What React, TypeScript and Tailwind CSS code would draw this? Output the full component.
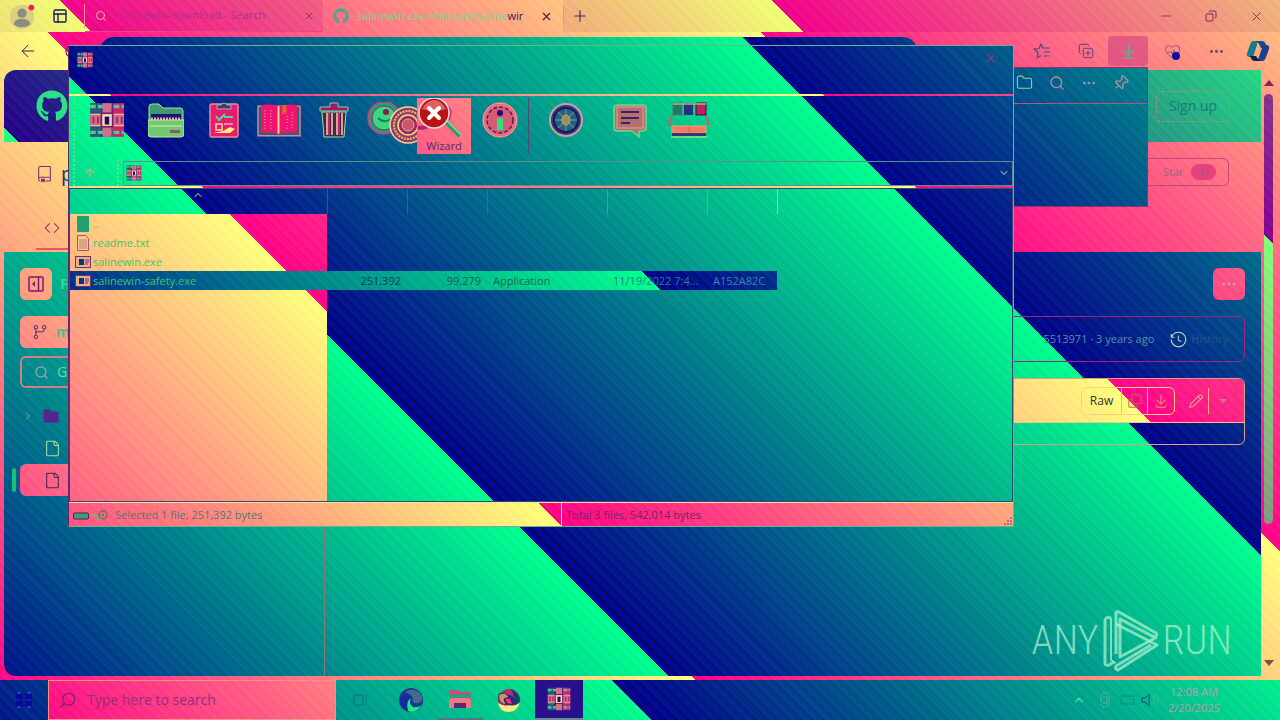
import React from "react";
import {
  ArrowLeft, ArrowDownToLine, Search, X, Plus, Minus, Copy, Ellipsis, Folder, Pin, ChevronDown, ChevronRight, ChevronUp,
  CopyPlus, ArrowUp, PanelsTopLeft, HeartPulse, RotateCw,
} from "lucide-react";
import { FaGithub } from "react-icons/fa";
import {
  GoCode, GoCopy, GoDownload, GoFile, GoFileDirectoryFill, GoGitBranch, GoHistory, GoPencil, GoRepo, GoStar,
} from "react-icons/go";

// Diagonal colour ramps anchored to the viewport, so neighbouring panels line up.
const cool =
  "bg-fixed bg-blend-screen bg-[repeating-linear-gradient(45deg,#060668_0px,#000008_8px),repeating-linear-gradient(45deg,#000068_0px,#00ff70_504px)]";
const coolBar =
  "bg-fixed bg-blend-screen bg-[repeating-linear-gradient(45deg,#060668_0px,#000008_8px),repeating-linear-gradient(45deg,#000068_461px,#00ff70_965px)]";
const coolPick =
  "bg-fixed bg-blend-screen bg-[repeating-linear-gradient(45deg,#060668_0px,#000008_8px),repeating-linear-gradient(45deg,#000068_267px,#00ff70_771px)]";
const violet =
  "bg-fixed bg-blend-screen bg-[repeating-linear-gradient(45deg,#060668_0px,#000008_8px),repeating-linear-gradient(45deg,#240068_422px,#24ff60_926px)]";
const plum =
  "bg-fixed bg-blend-screen bg-[repeating-linear-gradient(45deg,#060668_0px,#000008_8px),repeating-linear-gradient(45deg,#820070_229px,#82ff50_733px)]";
const warm =
  "bg-fixed bg-blend-screen bg-[repeating-linear-gradient(45deg,#08085a_0px,#000008_8px),repeating-linear-gradient(45deg,#ff006c_16px,#ffff60_520px)]";
const warmTitle =
  "bg-fixed bg-blend-screen bg-[repeating-linear-gradient(45deg,#08085a_0px,#000008_8px),repeating-linear-gradient(45deg,#f00070_47px,#f0ff54_551px)]";
const warmStatus =
  "bg-fixed bg-blend-screen bg-[repeating-linear-gradient(45deg,#08085a_0px,#000008_8px),repeating-linear-gradient(45deg,#ff0068_30px,#ffff5c_534px)]";

function Archive({ className }: { className: string }) {
  return (
    <svg viewBox="0 0 32 32" className={className} aria-hidden="true">
      <rect x="1" y="1" width="9" height="30" fill="#275a78" />
      <rect x="10" y="1" width="11" height="30" fill="#3a2c86" />
      <rect x="21" y="1" width="10" height="30" fill="#d61f6e" />
      <path d="M1 4h30M1 27h30" stroke="#54c890" strokeWidth="3" strokeDasharray="5 2" />
      <rect x="1" y="11" width="30" height="10" fill="#d8688a" />
      <path d="M1 11h30M1 21h30" stroke="#f0c090" strokeWidth="1" />
      <rect x="12" y="1" width="8" height="30" fill="#d0708c" />
      <rect x="11" y="10" width="10" height="12" fill="#f8d8b8" stroke="#70206a" strokeWidth="1.5" />
      <rect x="14" y="13" width="4" height="7" fill="#160c60" />
      <path d="M4 13v6M8 13v6M25 13v6M29 13v6" stroke="#8a2a70" strokeWidth="1.5" />
    </svg>
  );
}

function FolderIcon() {
  return (
    <svg viewBox="0 0 36 36" className="h-9 w-9" aria-hidden="true">
      <path d="M1 5q0-3 3-3h7l4 4h17q3 0 3 3v22H1z" fill="#3f9a70" stroke="#a6e09a" />
      <rect x="3" y="12" width="30" height="6" fill="#1c1470" />
      <path d="M3 17h30" stroke="#f4a0b8" strokeWidth="3" strokeDasharray="2 1" />
      <path d="M0 18h36v14q0 3-3 3H3q-3 0-3-3z" fill="#74c870" stroke="#b8ee98" />
      <path d="M2 24h32" stroke="#9be08a" strokeWidth="2" />
      <rect x="22" y="28" width="10" height="3" fill="#8c5a60" />
    </svg>
  );
}

function Clipboard() {
  return (
    <svg viewBox="0 0 36 36" className="h-9 w-9" aria-hidden="true">
      <rect x="4" y="2" width="28" height="33" rx="2" fill="#f0186e" stroke="#e88a90" strokeWidth="1.5" />
      <path d="M11 7V3h4q3-4 6 0h4v4z" fill="#58307a" stroke="#80c8a0" />
      <path d="M10 14l3 4 6-6M18 15h9" stroke="#4ae09a" strokeWidth="2" fill="none" />
      <rect x="10" y="22" width="6" height="6" fill="none" stroke="#ffe090" strokeWidth="1.5" />
      <path d="M7 31l10-2 7-4 5 2-5 4H9" fill="#fff080" />
      <path d="M18 22h9" stroke="#f4b0c0" strokeWidth="1.5" />
    </svg>
  );
}

function Book() {
  return (
    <svg viewBox="0 0 45 36" className="h-9 w-11" aria-hidden="true">
      <path d="M1 4h43v30H1z" fill="#206a74" stroke="#e080a0" strokeWidth="1.5" />
      <path d="M4 3q10-2 18 1v28q-8-2-18-1zM23 4q8-3 18-1v28q-10-1-18 1z" fill="#f01470" />
      <path d="M22 4v28" stroke="#ffd890" strokeWidth="2" />
      <path d="M8 8v20M14 8v20M36 10v18M31 14v14" stroke="#ff8090" strokeWidth="1.5" strokeDasharray="1 2" />
      <path d="M26 3h4v10l-2-3-2 3z" fill="#d07030" />
    </svg>
  );
}

function Trash() {
  return (
    <svg viewBox="0 0 36 36" className="h-9 w-9" aria-hidden="true">
      <path d="M4 9h28v-4H22V1h-8v4H4z" fill="#a01868" stroke="#78d8a0" />
      <path d="M6 10h24l-2 25H8z" fill="#3c2c40" stroke="#9ce0a0" />
      <path d="M11 11v22M16 11v22M21 11v22M26 11v22" stroke="#d8a098" strokeWidth="2" />
      <path d="M13 11v22M23 11v22" stroke="#c82068" strokeWidth="2" />
    </svg>
  );
}

function Discs() {
  return (
    <svg viewBox="0 0 56 48" className="h-12 w-14 shrink-0" aria-hidden="true">
      <circle cx="20" cy="16" r="16" fill="#20a070" stroke="#e03880" strokeWidth="1.5" />
      <circle cx="20" cy="16" r="12" fill="#38d880" stroke="#902868" />
      <circle cx="22" cy="10" r="3" fill="#8c1850" />
      <path d="M14 16q6 6 13 1" stroke="#188060" strokeWidth="2" fill="none" />
      <circle cx="44" cy="23" r="18" fill="#904060" stroke="#ffd490" strokeWidth="1.5" />
      <circle cx="44" cy="23" r="14" fill="none" stroke="#f8b080" strokeWidth="2" strokeDasharray="2 1" />
      <circle cx="44" cy="23" r="10" fill="#a02868" stroke="#f0e080" strokeWidth="1.5" />
      <circle cx="44" cy="23" r="6" fill="#c85870" stroke="#e0b080" />
    </svg>
  );
}

function Wand() {
  return (
    <svg viewBox="0 0 54 42" className="h-[42px] w-[54px]" aria-hidden="true">
      <path d="M27 22l16 16" stroke="#249a70" strokeWidth="4" />
      <path d="M28 21l16 16" stroke="#5cf09a" strokeWidth="1.5" />
      <path d="M30 8q6 4 2 14" stroke="#e02870" strokeWidth="2" fill="none" />
      <path d="M1 30q10 0 14-5" stroke="#b82070" strokeWidth="4" fill="none" />
      <circle cx="17" cy="15" r="15" fill="#b81414" stroke="#e8d8d8" strokeWidth="1.5" />
      <path d="M5 11q5-9 12-9t12 9q-12 4-24 0" fill="#e06060" />
      <path d="M12 10l10 10M22 10L12 20" stroke="#fff" strokeWidth="4" strokeLinecap="round" />
    </svg>
  );
}

function InfoRound() {
  return (
    <svg viewBox="0 0 36 36" className="h-9 w-9" aria-hidden="true">
      <circle cx="18" cy="18" r="17" fill="#f06a7c" stroke="#ffa890" />
      <circle cx="18" cy="18" r="13" fill="#d85a74" stroke="#3c2470" strokeWidth="1.5" strokeDasharray="4 2" />
      <circle cx="18" cy="11" r="3" fill="#181070" />
      <rect x="15" y="16" width="6" height="12" fill="#30e080" />
    </svg>
  );
}

function Shield() {
  return (
    <svg viewBox="0 0 36 36" className="h-9 w-9" aria-hidden="true">
      <circle cx="18" cy="18" r="16" fill="#24407a" stroke="#d89aa0" strokeWidth="2" />
      <circle cx="18" cy="18" r="12" fill="#285c88" stroke="#181860" strokeWidth="2" />
      <path d="M18 7v22M7 18h22M10 10l16 16M26 10L10 26" stroke="#5a8c70" strokeWidth="1.5" />
      <ellipse cx="18" cy="18" rx="4" ry="5" fill="#9a8c60" stroke="#d0b070" />
    </svg>
  );
}

function Comment() {
  return (
    <svg viewBox="0 0 36 36" className="h-9 w-9" aria-hidden="true">
      <path d="M5 3h26q3 0 3 3v20q0 3-3 3h-4v6l-7-6H5q-3 0-3-3V6q0-3 3-3z" fill="#b4706c" stroke="#6ad890" strokeWidth="1.5" />
      <path d="M5 5h26v21H5z" fill="none" stroke="#d89078" strokeWidth="1.5" />
      <path d="M9 10h18M9 16h18M9 21h9" stroke="#3a206c" strokeWidth="2" />
    </svg>
  );
}

function SfxBox() {
  return (
    <svg viewBox="0 0 42 36" className="h-9 w-[42px]" aria-hidden="true">
      <rect x="5" y="1" width="9" height="12" fill="#1f7a60" stroke="#60706c" />
      <rect x="16" y="1" width="9" height="12" fill="#2a3080" />
      <rect x="28" y="1" width="10" height="12" fill="#c0205c" stroke="#301050" />
      <path d="M5 2h33" stroke="#a8b880" strokeWidth="1.5" />
      <path d="M4 14L1 24M38 14l3 10" stroke="#e85068" strokeWidth="2" />
      <rect x="4" y="24" width="34" height="7" fill="#f47a60" stroke="#f8a070" />
      <path d="M21 24v7" stroke="#c87040" />
      <rect x="4" y="31" width="34" height="3" fill="#2a3c78" />
      <path d="M3 35h36" stroke="#f0e080" />
    </svg>
  );
}

function SidebarIcon() {
  return (
    <svg viewBox="0 0 16 16" className="h-4 w-4" fill="none" stroke="currentColor" strokeWidth="1.5" aria-hidden="true">
      <rect x="1" y="1" width="14" height="14" rx="1" />
      <path d="M10.500 1v14" />
      <path d="M7 5v6L4 8z" fill="currentColor" stroke="none" />
    </svg>
  );
}

function FavoritesIcon() {
  return (
    <svg viewBox="0 0 18 18" className="h-[18px] w-[18px]" fill="none" stroke="currentColor" strokeWidth="1.2" strokeLinejoin="round" aria-hidden="true">
      <path d="M11 6L9.500 6 8 2 6 6.500 1 7l4 3.500L4 16l4-2.500" stroke="#40507c" />
      <path d="M11 6h6M11 10h6M11 14h5" stroke="#305890" />
    </svg>
  );
}

function Tool({ label, width, children }: { label: string; width: string; children: React.ReactNode }) {
  return (
    <button aria-label={label} className={"flex h-14 shrink-0 justify-center pt-1 " + width}>
      {children}
    </button>
  );
}

function ExeIcon() {
  return (
    <svg viewBox="0 0 16 14" className="h-3.5 w-4 shrink-0" aria-hidden="true">
      <rect x="0.5" y="1.5" width="15" height="11" fill="#e8b088" stroke="#70306c" />
      <rect x="4" y="4" width="5" height="6" fill="#123078" />
      <path d="M10 5h4M10 7h4M10 9h3" stroke="#70306c" />
    </svg>
  );
}

function NameCell({ icon, text }: { icon: React.ReactNode; text: string }) {
  return (
    <div className="flex items-center gap-0.5 pl-[5px] text-[#40c46c]">
      {icon}
      <span>{text}</span>
    </div>
  );
}

function TabStrip() {
  return (
    <div className={"flex h-8 shrink-0 items-center " + warmTitle}>
      <button aria-label="Profile" className="flex w-11 justify-center">
        <svg viewBox="0 0 30 30" className="h-7 w-7" aria-hidden="true">
          <circle cx="15" cy="16" r="13" fill="#dcd07c" />
          <circle cx="15" cy="12" r="5" fill="#8c8c86" />
          <path d="M6 24q1-6 9-6t9 6q-4 3-9 3t-9-3" fill="#8c8c86" />
          <circle cx="25" cy="6" r="3" fill="#e82050" stroke="#f06080" strokeDasharray="1 1" />
        </svg>
      </button>
      <button aria-label="Workspaces" className="flex w-8 justify-center text-[#101860]">
        <PanelsTopLeft size={16} />
      </button>
      <div className="ml-2 flex h-6 items-center border-l border-[#ff9090]" />
      <div className="flex h-full w-[238px] items-center gap-2 border-b border-[#e04c80] pl-2.5 pr-2 text-[#b0308c]">
        <Search size={12} className="text-[#ffc098]" />
        <a href="#search" className="flex-1 truncate pl-1 text-[11px]">salinewin-download - Search</a>
        <button aria-label="Close search tab"><X size={12} className="text-[#80306c]" /></button>
      </div>
      <div className={"flex h-full w-60 items-center gap-2 px-2.5 " + warm}>
        <FaGithub size={16} className="text-[#4aa890]" />
        <a href="#repo" className="flex-1 overflow-hidden whitespace-nowrap text-[11px] text-[#80d488]">
          salinewin.exe-Malware/saline<span className="text-[#302050]">wir</span>
        </a>
        <button aria-label="Close repository tab"><X size={13} className="text-[#40204c]" /></button>
      </div>
      <button aria-label="New tab" className="flex w-8 justify-center border-l border-[#d8a070] text-[#40206c]">
        <Plus size={18} strokeWidth={1.5} />
      </button>
      <div className="flex flex-1 items-center justify-end gap-8 pr-4 text-[#80285c]">
        <button aria-label="Minimize"><Minus size={14} strokeWidth={1.5} /></button>
        <button aria-label="Restore"><Copy size={12} className="-scale-x-100" strokeWidth={2} /></button>
        <button aria-label="Close browser"><X size={15} strokeWidth={1.5} /></button>
      </div>
    </div>
  );
}

function AddressRow() {
  return (
    <div className={"flex h-[38px] shrink-0 items-center " + warm}>
      <button aria-label="Back" className="ml-[18px] flex w-[42px] text-[#302060]"><ArrowLeft size={20} strokeWidth={1.2} /></button>
      <button aria-label="Reload" className="flex w-10 pl-1 text-[#80206c]"><RotateCw size={15} /></button>
      <div className={"h-7 w-[817px] shrink-0 rounded-2xl " + cool} />
      <div className="flex flex-1 items-center justify-end text-[#60407c]">
        <button aria-label="Favorites" className="flex w-11 justify-center"><FavoritesIcon /></button>
        <button aria-label="Collections" className="flex w-11 justify-center"><CopyPlus size={16} strokeWidth={1.5} /></button>
        <button aria-label="Downloads" className="flex h-[30px] w-10 items-center justify-center rounded bg-[#d04080]/60 text-[#50b898]">
          <ArrowDownToLine size={17} />
        </button>
        <button aria-label="Performance" className="relative flex w-12 justify-center text-[#a06080]">
          <HeartPulse size={17} strokeWidth={1.5} />
          <span className="absolute right-4 bottom-0 h-2 w-2 rounded-full bg-[#1010a0]" />
        </button>
        <button aria-label="More" className="flex w-10 justify-center"><Ellipsis size={17} /></button>
        <button aria-label="Copilot" className="flex w-11 justify-center">
          <svg viewBox="0 0 24 24" className="h-6 w-6" aria-hidden="true">
            <path d="M8 2h8q3 0 4 4l1 3h-6l-2-4q-1-2-5-3" fill="#154a88" />
            <path d="M8 2q-3 0-4 4L1 14q-1 4 3 4h3l4-12q1-4-3-4" fill="#187a88" />
            <path d="M16 22q3 0 4-4l3-8q1-4-3-4h-3l-4 12q-1 4-5 4" fill="#203c90" />
            <path d="M4 17h6l2 3q1 2 4 2H9q-3 0-4-3" fill="#082058" />
          </svg>
        </button>
      </div>
    </div>
  );
}

function RepoPage() {
  return (
    <div className={"flex min-w-0 flex-1 flex-col overflow-hidden rounded-l-xl " + cool}>
      <header className={"flex h-[72px] shrink-0 items-center justify-between pl-8 pr-[31px] " + violet}>
        <a href="#home" aria-label="GitHub home" className="text-[#2ce088]"><FaGithub size={32} /></a>
        <a href="#signup" className="flex h-[31px] w-[74px] items-center justify-center rounded-md border border-dashed border-[#b88878] text-sm text-[#187c74]">
          Sign up
        </a>
      </header>
      <div className={"flex h-[110px] shrink-0 justify-between pt-4 pr-8 " + warm}>
        <div className="flex flex-col gap-7">
          <div className="flex h-8 items-center gap-2 pl-8 text-[#80306c]">
            <GoRepo size={17} />
            <span className="text-xl text-[#183470]">p</span>
          </div>
          <div className="ml-8 flex h-8 items-start border-b-2 border-[#f05070] pt-0.5 pl-2 text-[#80306c]"><GoCode size={16} /></div>
        </div>
        <button className="flex h-7 items-center gap-2 rounded-md border border-[#c04878] px-3 text-[11px] text-[#a06080]">
          <GoStar size={14} />
          <span className="pl-1">Star</span>
          <span className="rounded-full bg-[#e8407c] px-1.5">31</span>
        </button>
      </div>
      <div className="flex min-h-0 flex-1">
        <nav className="flex w-[321px] shrink-0 flex-col border-r border-[#8c7878] pt-4 pl-4 text-sm text-[#38d88c]">
          <div className="flex h-8 items-center gap-2">
            <button aria-label="Toggle tree" className={"flex h-8 w-8 items-center justify-center rounded-md text-[#70206c] " + warm}>
              <SidebarIcon />
            </button>
            <span className="font-bold">F</span>
          </div>
          <button className={"mt-4 flex h-8 w-60 items-center gap-2 rounded-md px-3 font-bold text-[#58b884] " + warm}>
            <GoGitBranch size={16} className="text-[#50405c]" />
            <span>m</span>
          </button>
          <button className="mt-2 flex h-8 w-60 items-center gap-2 rounded-md border-2 border-[#d87c80] px-3 text-[#60e0a0]">
            <Search size={15} className="text-[#b0a0b0]" />
            <span>Go</span>
          </button>
          <div className="mt-3 flex h-8 items-center gap-2 pl-0.5">
            <ChevronRight size={12} className="text-[#90a0b0]" />
            <GoFileDirectoryFill size={18} className="text-[#502890]" />
          </div>
          <div className="flex h-8 items-center pl-6"><GoFile size={17} className="text-[#a8e0a0]" /></div>
          <div className="-ml-2 flex h-8 items-center gap-1">
            <span className="h-6 w-1 rounded-full bg-[#18c07c]" />
            <div className={"flex h-8 w-60 items-center rounded-md pl-6 " + warm}>
              <GoFile size={17} className="text-[#402858]" />
            </div>
          </div>
        </nav>
        <main className="flex min-w-0 flex-1 flex-col pt-4 pr-4 pl-8">
          <button aria-label="More options" className={"flex h-8 w-8 items-center justify-center self-end rounded-md text-[#c8a0a8] " + warm}>
            <Ellipsis size={18} />
          </button>
          <div className="mt-4 flex h-[46px] items-center justify-end gap-4 rounded-md border border-[#a02480] pr-4 text-[11px] text-[#5890a8]">
            <span>5513971 · 3 years ago</span>
            <a href="#history" className="flex items-center gap-1 text-[#205888]">
              <GoHistory size={17} className="text-[#b8e0a8]" />
              <span>History</span>
            </a>
          </div>
          <div className="mt-4 flex flex-col overflow-hidden rounded-md border border-[#d8a088]">
            <div className={"flex h-11 items-center justify-end gap-2 border-b border-[#ffc080] pr-[7px] " + warm}>
              <div className="flex h-7 items-center divide-x divide-[#ffb080] rounded-md border border-[#f8d080]">
                <button className="flex h-full w-10 items-center justify-center text-xs text-[#383038]">Raw</button>
                <button aria-label="Copy raw file" className="flex h-full w-[26px] items-center justify-center text-[#b07060]"><GoCopy size={16} /></button>
                <button aria-label="Download raw file" className="flex h-full w-[26px] items-center justify-center text-[#e0a080]"><GoDownload size={16} /></button>
              </div>
              <div className="flex h-7 items-center rounded-md border border-[#f02c7c]">
                <button aria-label="Edit file" className="flex h-full w-6 items-center justify-center text-[#e0b090]"><GoPencil size={16} /></button>
                <button aria-label="More edit options" className="flex h-full w-7 items-center justify-center border-l border-[#ffb080] text-[#c88078]">
                  <svg viewBox="0 0 8 4" className="h-1 w-2" aria-hidden="true"><path d="M0 0h8L4 4z" fill="currentColor" /></svg>
                </button>
              </div>
            </div>
            <div className="h-[21px]" />
          </div>
        </main>
      </div>
    </div>
  );
}

function Scrollbar() {
  return (
    <div className={"flex w-[19px] shrink-0 flex-col items-center gap-2 py-2.5 pr-1 " + warm}>
      <svg viewBox="0 0 10 6" className="h-1.5 w-2.5 shrink-0" aria-hidden="true"><path d="M5 0l5 6H0z" fill="#901c60" /></svg>
      <div className={"h-[430px] w-[9px] rounded-full " + plum} />
      <div className="flex-1" />
      <svg viewBox="0 0 10 6" className="h-1.5 w-2.5 shrink-0" aria-hidden="true"><path d="M5 6l5-6H0z" fill="#805040" /></svg>
    </div>
  );
}

function DownloadsPanel() {
  return (
    <div className={"absolute top-[67px] right-[132px] h-[140px] w-[140px] border border-[#90306c] " + cool}>
      <div className="flex h-9 items-center justify-end gap-4 border-b border-[#c05080] pr-[18px] pb-1.5 text-[#a890a0]">
        <button aria-label="Open folder"><Folder size={17} className="text-[#90d090]" strokeWidth={1.5} /></button>
        <button aria-label="Search downloads"><Search size={16} /></button>
        <button aria-label="More download options"><Ellipsis size={16} /></button>
        <button aria-label="Pin downloads"><Pin size={16} className="rotate-45" /></button>
      </div>
    </div>
  );
}

function FileTable() {
  return (
    <table className="h-full w-[707px] table-fixed border-collapse text-[11px] leading-4">
      <colgroup>
        <col className="w-[257px]" /><col className="w-20" /><col className="w-20" /><col className="w-[120px]" />
        <col className="w-[100px]" /><col className="w-[70px]" />
      </colgroup>
      <thead>
        <tr className="h-[25px]">
          <th className="border-r border-[#80307c] p-0 align-top"><ChevronUp size={12} className="mx-auto text-[#e0f0a0]" /></th>
          <th className="border-r border-[#80407c] p-0" />
          <th className="border-r border-[#80507c] p-0" />
          <th className="border-r border-[#a07880] p-0" />
          <th className="border-r border-[#80a080] p-0" />
          <th className="border-r border-[#a0d888] p-0" />
        </tr>
      </thead>
      <tbody>
        <tr className="h-[19px]">
          <td className={"p-0 " + warm}>
            <NameCell icon={<span className="mx-0.5 h-4 w-3 shrink-0 bg-[#20a070]" />} text=".." />
          </td>
          <td colSpan={5} className="p-0" />
        </tr>
        <tr className="h-[19px]">
          <td className={"p-0 " + warm}>
            <NameCell
              icon={
                <svg viewBox="0 0 16 16" className="h-4 w-4 shrink-0" aria-hidden="true">
                  <path d="M2.500 .5h8l3 3v12h-11z" fill="#f8c890" stroke="#a05870" />
                  <path d="M4 5h8M4 7h8M4 9h8M4 11h8M4 13h8" stroke="#a87070" strokeWidth="0.800" />
                </svg>
              }
              text="readme.txt"
            />
          </td>
          <td colSpan={5} className="p-0" />
        </tr>
        <tr className="h-[19px]">
          <td className={"p-0 " + warm}><NameCell icon={<ExeIcon />} text="salinewin.exe" /></td>
          <td colSpan={5} className="p-0" />
        </tr>
        <tr className="h-[19px] text-[#206c78]">
          <td className={"p-0 " + coolPick}><NameCell icon={<ExeIcon />} text="salinewin-safety.exe" /></td>
          <td className={"p-0 pr-1.5 text-right text-[#103c5c] " + coolPick}>251,392</td>
          <td className={"p-0 pr-1.5 text-right text-[#106050] " + coolPick}>99,279</td>
          <td className={"p-0 pl-1.5 text-[#106850] " + coolPick}>Application</td>
          <td className={"truncate p-0 pl-1.5 text-[#20847c] " + coolPick}>11/19/2022 7:4...</td>
          <td className={"p-0 pl-1.5 text-[#3c84a8] " + coolPick}>A152A82C</td>
        </tr>
        <tr>
          <td className={"p-0 " + warm} />
          <td colSpan={5} className="p-0" />
        </tr>
      </tbody>
    </table>
  );
}

function ArchiveWindow() {
  return (
    <section className={"absolute top-[45px] right-[266px] left-[68px] flex h-[482px] flex-col border border-[#70b08c] border-l-[#602870] " + cool}>
      <div className="flex h-12 shrink-0 items-start justify-between px-2 pt-1.5">
        <Archive className="h-4 w-4" />
        <button aria-label="Close archive" className="pr-2 text-[#a03080]"><X size={13} /></button>
      </div>
      <div className={"h-0.5 shrink-0 " + warm} />
      <div className="ml-1 flex h-16 shrink-0 items-start border-l-2 border-dotted border-[#50e088] pt-0.5">
        <Tool label="Add" width="w-16"><Archive className="h-9 w-9" /></Tool>
        <Tool label="Extract To" width="w-[53px]"><FolderIcon /></Tool>
        <Tool label="Test" width="w-16"><Clipboard /></Tool>
        <Tool label="View" width="w-[46px]"><Book /></Tool>
        <Tool label="Delete" width="w-16"><Trash /></Tool>
        <Tool label="Find" width="w-[51px]"><Discs /></Tool>
        <button className={"z-10 flex h-14 w-[54px] shrink-0 flex-col items-center text-[11px] leading-3 text-[#503068] " + warm}>
          <Wand />
          <span>Wizard</span>
        </button>
        <Tool label="Info" width="w-[57px]"><InfoRound /></Tool>
        <div className="h-14 border-l border-[#604078]" />
        <Tool label="VirusScan" width="w-[74px]"><Shield /></Tool>
        <Tool label="Comment" width="w-[54px]"><Comment /></Tool>
        <Tool label="SFX" width="w-16"><SfxBox /></Tool>
      </div>
      <div className="flex h-[26px] shrink-0 items-center">
        <button aria-label="Up one level" className="ml-1 flex h-full w-[46px] items-center justify-center border-x-2 border-dotted border-[#60e088] pr-3 text-[#d0a878]">
          <ArrowUp size={14} />
        </button>
        <div className="ml-1 flex h-[25px] flex-1 items-center justify-between border border-[#5c9090] px-0.5">
          <Archive className="h-4 w-4" />
          <button aria-label="Path history" className="text-[#d8e8b0]"><ChevronDown size={12} /></button>
        </div>
      </div>
      <div className={"h-0.5 shrink-0 " + warm} />
      <div className="min-h-0 flex-1 border border-[#304c70]"><FileTable /></div>
      <footer className={"flex h-6 shrink-0 items-center border-t border-[#f8e0a0] text-[11px] text-[#587868] " + warmStatus}>
        <div className="flex h-full w-[493px] shrink-0 items-center border-r border-[#ffe0a0] pt-0.5 pl-1">
          <svg viewBox="0 0 40 16" className="h-4 w-10" aria-hidden="true">
            <rect x="0.500" y="5" width="15" height="6" rx="1" fill="#38a074" stroke="#601858" />
            <path d="M19 7h4l3 4h5" stroke="#70b878" strokeWidth="2" fill="none" />
            <circle cx="30" cy="7" r="4" fill="#e07080" stroke="#806858" strokeWidth="1.5" />
            <circle cx="30" cy="7" r="1" fill="#408068" />
          </svg>
          <span className="pl-0.5">Selected 1 file, 251,392 bytes</span>
        </div>
        <span className="flex-1 pt-0.5 pl-1 text-[#702468]">Total 3 files, 542,014 bytes</span>
        <svg viewBox="0 0 10 10" className="h-2.5 w-2.5 self-end" aria-hidden="true">
          <path d="M7 1h2v2H7zM4 4h2v2H4zM7 4h2v2H7zM1 7h2v2H1zM4 7h2v2H4zM7 7h2v2H7z" fill="#b06c80" />
        </svg>
      </footer>
    </section>
  );
}

function Watermark() {
  return (
    <div className="absolute right-12 bottom-12 flex items-center gap-1 font-['Roboto_Condensed','Liberation_Sans_Narrow','Liberation_Sans',sans-serif] text-[40px] leading-[62px] font-light text-[#a8f0d0]/75">
      <span>ANY</span>
      <svg viewBox="0 0 56 62" className="h-[62px] w-14" fill="none" stroke="currentColor" strokeWidth="3" strokeLinejoin="round" aria-hidden="true">
        <path d="M8 8Q2 6 2 11v42q0 3 4 2l5-3" />
        <path d="M8 8v42l5 3" strokeWidth="2" />
        <path d="M13 44V3q0-2 3-1l37 21q2 2-1 4l-3-1-32-17v38l37-20" />
        <path d="M13 14l41 21-39 25q-3 0-2-4l35-21" />
      </svg>
      <span>RUN</span>
    </div>
  );
}

function Taskbar() {
  return (
    <footer className={"flex h-10 shrink-0 items-center " + coolBar}>
      <button aria-label="Start" className="flex w-12 justify-center">
        <svg viewBox="0 0 16 16" className="h-4 w-4" aria-hidden="true">
          <path d="M0 1h7v6H0zM9 1h7v6H9zM0 9h7v6H0zM9 9h7v6H9z" fill="#0808a0" />
          <path d="M1 1h4M11 1h4M1 15h4M11 15h4" stroke="#3880a0" />
        </svg>
      </button>
      <label className={"flex h-full w-[288px] items-center gap-2.5 border border-[#f89080] pl-2.5 " + warm}>
        <Search size={18} strokeWidth={1.5} className="-scale-x-100 text-[#702468]" />
        <input aria-label="Search" placeholder="Type here to search" className="w-56 bg-transparent text-sm text-[#90307c] outline-none placeholder:text-[#90307c]" />
      </label>
      <button aria-label="Task view" className="flex w-[49px] justify-center text-[#109080]">
        <svg viewBox="0 0 16 12" className="h-3 w-4" fill="none" stroke="#0c7080" aria-hidden="true">
          <path d="M1 1h9v10H1zM13 1v3M13 5v3M13 9v2" />
        </svg>
      </button>
      <button aria-label="Edge" className="flex h-full w-[52px] items-center justify-center">
        <svg viewBox="0 0 24 24" className="h-6 w-6" aria-hidden="true">
          <circle cx="12" cy="12" r="12" fill="#183c8c" />
          <path d="M6 4q8-5 15 1 5 7-1 10-6 1-6-3 0-6-8-8" fill="#486890" />
          <path d="M12 10q-3 6 2 9 5 1 8-2-3 7-10 7-7-2-5-9 1-4 5-5" fill="#20e888" />
          <path d="M1 10q6-7 12 0-7 2-4 13Q0 20 1 10" fill="#1828a0" />
        </svg>
      </button>
      <button aria-label="File Explorer" className="flex h-full w-[46px] items-center justify-center border-b-2 border-[#507888]">
        <svg viewBox="0 0 24 22" className="h-[22px] w-6" aria-hidden="true">
          <path d="M1 2h9l2 2h11v5H1z" fill="#d04878" />
          <rect x="1" y="6" width="22" height="14" fill="#38987c" />
          <path d="M1 20v-7q0-3 3-3h16q3 0 3 3v7h-5v-5H6v5z" fill="#f07880" />
          <path d="M6 20v-5h12v5" fill="#602870" />
        </svg>
      </button>
      <button aria-label="Firefox" className="flex h-full w-[52px] items-center justify-center">
        <svg viewBox="0 0 24 24" className="h-6 w-6" aria-hidden="true">
          <circle cx="12" cy="12" r="11" fill="#b03070" />
          <path d="M1 15q10 6 22-2-2 11-11 11T1 15" fill="#ffe880" />
          <path d="M14 1q10 4 9 13-5 5-11 3 8-4 2-16" fill="#184068" />
          <circle cx="12" cy="12" r="5" fill="#401c78" />
          <path d="M8 10l5 1 2 5-5-1z" fill="#e83878" />
          <path d="M2 6l6-1 4 4-5 2 2 6Q0 15 2 6" fill="#c09868" stroke="#402060" />
        </svg>
      </button>
      <button aria-label="WinRAR" className="flex h-full w-12 items-center justify-center border-b-2 border-[#688898] bg-[#28108c]"><Archive className="h-6 w-6" /></button>
      <div className="flex flex-1 items-center justify-end pr-7 text-[#40e09c]">
        <button aria-label="Hidden icons" className="mr-3"><ChevronUp size={14} /></button>
        <svg viewBox="0 0 14 18" className="mr-2 h-[18px] w-3.5" fill="none" stroke="#78b0a8" strokeDasharray="2 1" aria-hidden="true">
          <rect x="3" y="2" width="8" height="14" rx="3" /><path d="M5 6h4v6H5" />
        </svg>
        <svg viewBox="0 0 40 16" className="mr-2 h-4 w-10" fill="none" aria-hidden="true">
          <rect x="1" y="4" width="13" height="8" stroke="#0c7c88" strokeDasharray="2 1" />
          <path d="M22 6h3l4-4v12l-4-4h-3z" stroke="#104c78" />
          <path d="M33 4q3 4 0 8M36 2q4 6 0 12" stroke="#80a8a0" strokeDasharray="2 1" />
        </svg>
        <div className="mr-5 flex flex-col items-center text-[11px] leading-4 text-[#b8a0a8]">
          <span>12:08 AM</span>
          <span>2/20/2025</span>
        </div>
        <button aria-label="Notifications" className="pt-3"><ChevronDown size={12} className="text-[#58c868]" /></button>
      </div>
    </footer>
  );
}

export default function App() {
  return (
    <div className="relative flex h-screen flex-col overflow-hidden font-['Open_Sans','Noto_Sans',sans-serif]">
      <TabStrip />
      <AddressRow />
      <div className={"flex min-h-0 flex-1 pb-1 pl-1 " + warm}>
        <RepoPage />
        <Scrollbar />
      </div>
      <Taskbar />
      <DownloadsPanel />
      <ArchiveWindow />
      <Watermark />
    </div>
  );
}
